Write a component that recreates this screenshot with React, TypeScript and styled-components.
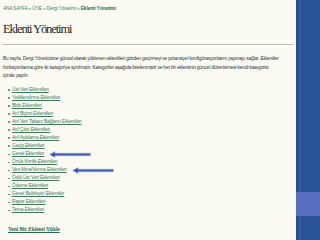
import React from "react";
import styled, { createGlobalStyle } from "styled-components";

const GlobalStyle = createGlobalStyle`
  html, body {
    margin: 0;
    padding: 0;
    background: #fbfaf3;
  }
`;

const plugins = [
  "Üst Veri Eklentileri",
  "Yetkilendirme Eklentileri",
  "Blok Eklentileri",
  "Atıf Biçimi Eklentileri",
  "Atıf Veri Tabanı Bağlantı Eklentileri",
  "Atıf Çıktı Eklentileri",
  "Atıf Ayıklama Eklentileri",
  "Geçiş Eklentileri",
  "Genel Eklentiler",
  "Örtük Kimlik Eklentileri",
  "Veri Alma/Verme Eklentileri",
  "Ödül Üst Veri Eklentileri",
  "Ödeme Eklentileri",
  "Genel Belirleyici Eklentiler",
  "Rapor Eklentileri",
  "Tema Eklentileri",
];

// the two entries the slide points at
const pointed = ["Genel Eklentiler", "Veri Alma/Verme Eklentileri"];

class App extends React.Component<any, any> {
  render() {
    return (
      <Page>
        <GlobalStyle />
        <Main>
          <Crumbs>
            <a href="#">ANA SAYFA</a> » <a href="#">ÜYE</a> »{" "}
            <a href="#">Dergi Yönetimi</a> » <b>Eklenti Yönetimi</b>
          </Crumbs>
          <Title>Eklenti Yönetimi</Title>
          <Rule />
          <Intro>
            Bu sayfa, Dergi Yöneticisine güncel olarak yüklenen eklentileri
            gözden geçirmeyi ve potansiyel konfigürasyonlarını yapmayı sağlar.
            Eklentiler
            <br />
            fonksiyonlarına göre iki kategoriye ayrılmıştır. Kategoriler aşağıda
            listelenmiştir ve her bir eklentinin güncel düzenlemesi kendi
            kategorisi
            <br />
            içinde yapılır.
          </Intro>
          <List>
            {plugins.map((p) => (
              <Item key={p}>
                <a href="#">{p}</a>
                {pointed.includes(p) && (
                  <Arrow width="42" height="7" viewBox="0 0 42 7">
                    <path
                      d="M0.6 3.5 L6 0.6 L6 2.2 L41.4 2.2 L41.4 4.8 L6 4.8 L6 6.4 Z"
                      fill="#3c54ad"
                      stroke="#a6b2e0"
                      strokeWidth="0.6"
                    />
                  </Arrow>
                )}
              </Item>
            ))}
          </List>
          <Upload href="#">Yeni Bir Eklenti Yükle</Upload>
        </Main>
        <Side>
          <SideMark />
        </Side>
      </Page>
    );
  }
}

const Page = styled.div`
  display: flex;
  width: 320px;
  height: 240px;
  background: #fbfaf3;
  overflow: hidden;
`;

const Main = styled.div`
  flex: 1;
  padding: 6px 2px 0 3px;
  font-family: "Liberation Sans", Arial, sans-serif;
  color: #3a3a3a;

  a {
    color: #3f7a58;
  }
`;

const Crumbs = styled.div`
  font-size: 4.8px;
  line-height: 6px;
  color: #5b8a6c;
  letter-spacing: -0.15px;

  a {
    text-decoration: none;
  }
  b {
    color: #2f6a47;
  }
`;

const Title = styled.h1`
  margin: 9px 0 0;
  font-family: "Liberation Serif", "Times New Roman", serif;
  font-weight: normal;
  font-size: 12.5px;
  line-height: 16px;
  letter-spacing: -1.1px;
  color: #1f1f1f;
`;

const Rule = styled.div`
  margin-top: 7px;
  border-top: 1px solid #bcbcae;
`;

const Intro = styled.p`
  margin: 10px 0 0;
  font-size: 4.9px;
  line-height: 8.5px;
  letter-spacing: -0.2px;
  white-space: nowrap;
  color: #333;
`;

const List = styled.ul`
  list-style: none;
  margin: 5px 0 0;
  padding: 0 0 0 9px;
  font-size: 4.9px;
  line-height: 8.07px;
  letter-spacing: -0.15px;
`;

const Item = styled.li`
  position: relative;

  &::before {
    content: "";
    position: absolute;
    left: -4px;
    top: 3.5px;
    width: 1.5px;
    height: 1.5px;
    border-radius: 50%;
    background: #777;
  }

  a {
    text-decoration: underline;
  }
`;

const Arrow = styled.svg`
  position: absolute;
  top: 0.5px;
  margin-left: 5px;
`;

const Upload = styled.a`
  display: inline-block;
  margin: 11px 0 0 5px;
  font-size: 5.6px;
  font-weight: bold;
  font-family: "Liberation Serif", serif;
  letter-spacing: -0.1px;
  color: #2f6a47 !important;
`;

const Side = styled.div`
  width: 24px;
  background: #2c5597;
  box-shadow: inset 3px 0 0 #2a5090, inset 4px 0 0 #3763a3;
  display: flex;
  flex-direction: column;
`;

const SideMark = styled.div`
  margin-top: 192px;
  height: 24px;
  background: #5a6fc2;
`;

export default App;
